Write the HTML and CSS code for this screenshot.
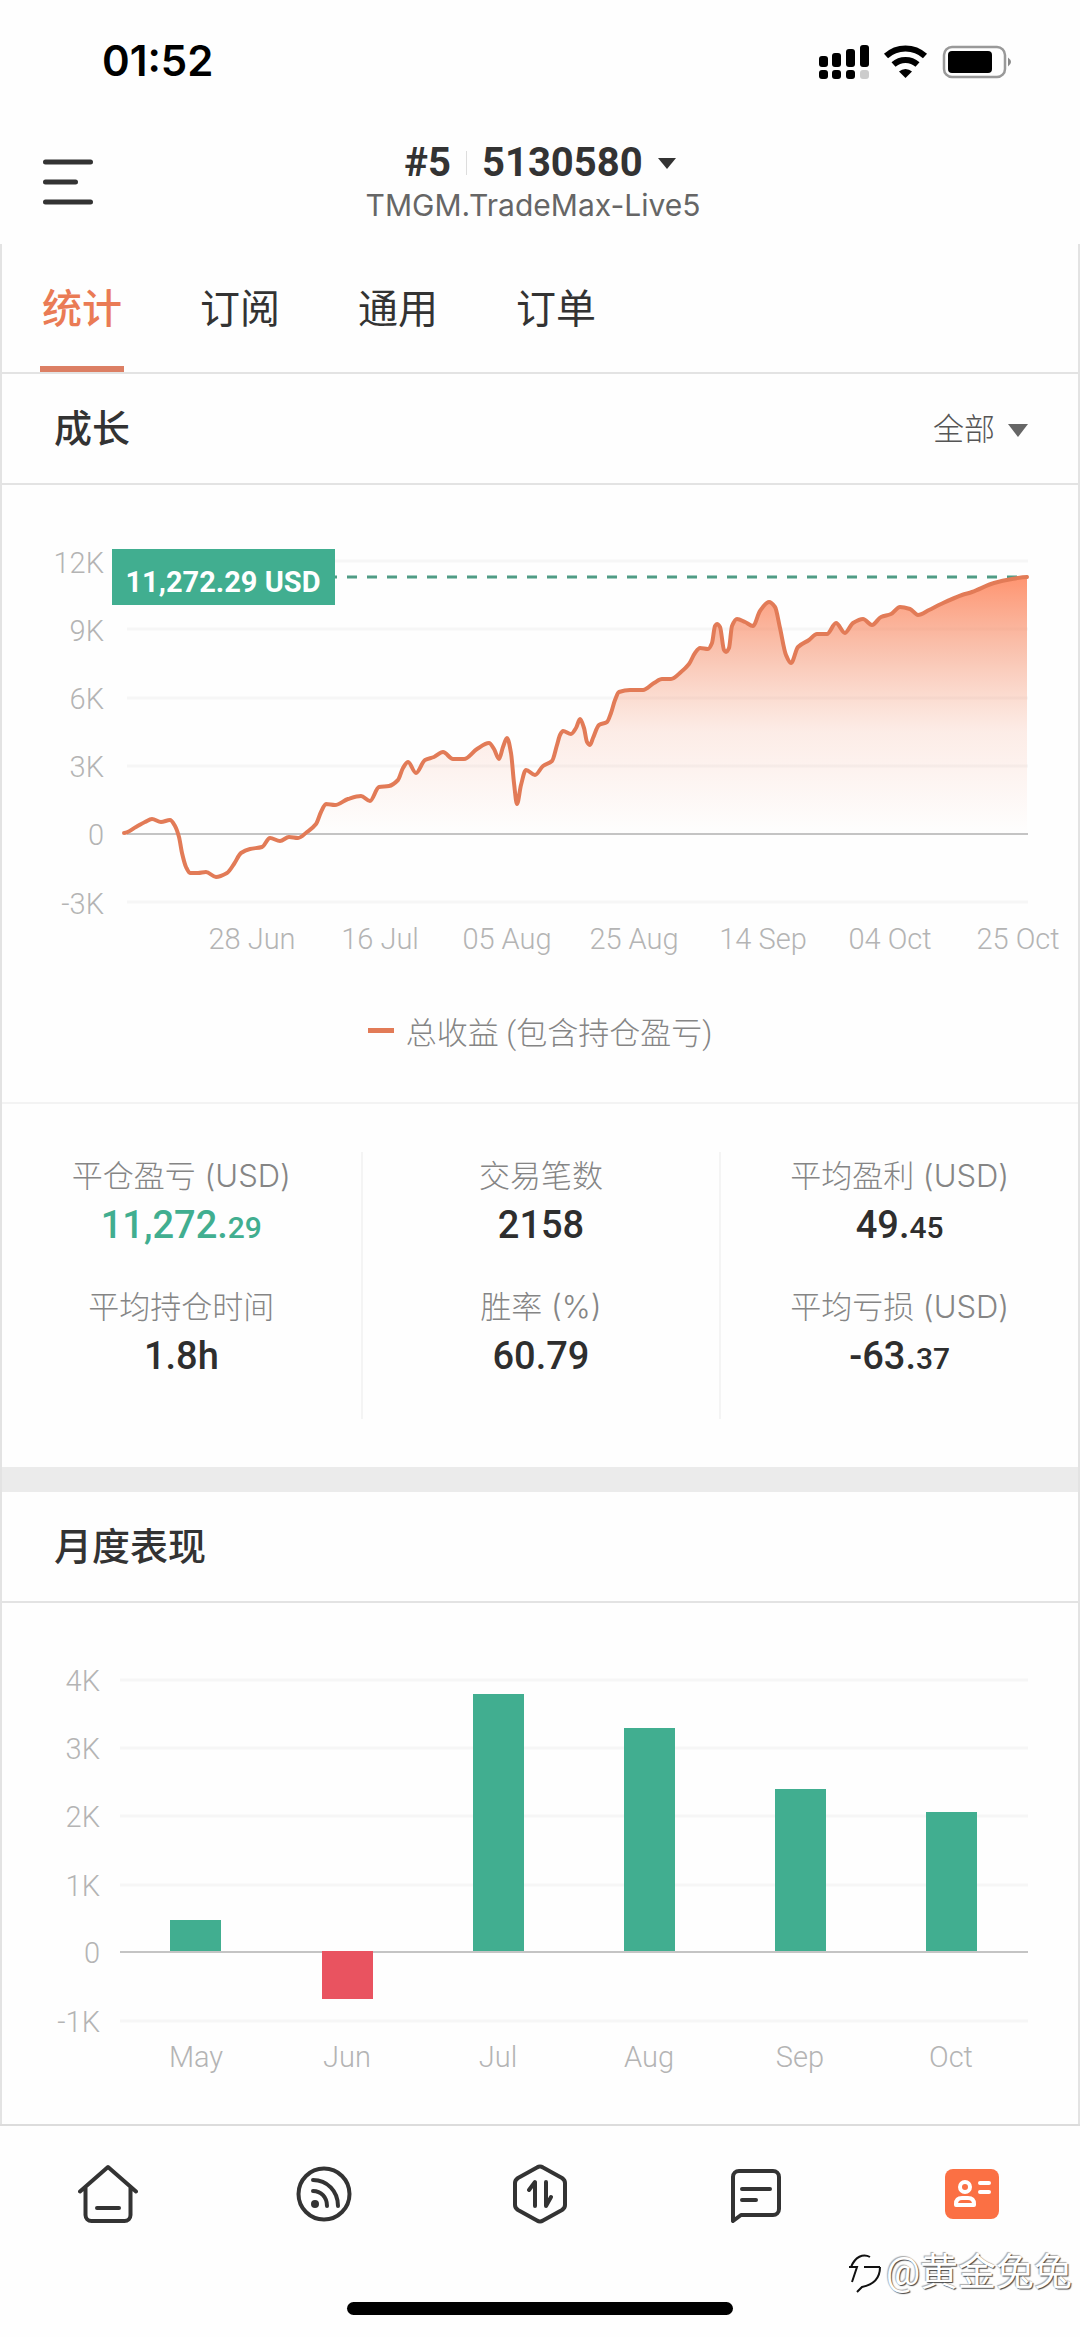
FILE: index.html
```html
<!DOCTYPE html>
<html lang="zh-CN">
<head>
<meta charset="utf-8">
<meta name="viewport" content="width=device-width, initial-scale=1">
<title>统计</title>
<link rel="stylesheet" href="styles.css">
</head>
<body>
<div class="status">
  <span class="clock">01:52</span>
  <svg class="status-icons" width="196" height="38" viewBox="0 0 196 38" aria-hidden="true">
    <rect x="2" y="14" width="9" height="11" rx="3"/><rect x="15" y="11" width="9" height="14" rx="3"/><rect x="29" y="7" width="9" height="18" rx="3"/><rect x="43" y="3" width="9" height="22" rx="3"/>
    <rect x="2" y="28" width="9" height="9" rx="3"/><rect x="15" y="28" width="9" height="9" rx="3"/><rect x="29" y="28" width="9" height="9" rx="3"/><rect x="43" y="28" width="9" height="9" rx="3" fill="#ccc"/>
    <path d="M69 14a29 29 0 0 1 39 0M76.500 22.500a18 18 0 0 1 24 0" fill="none" stroke="#000" stroke-width="6"/>
    <path d="M82 29.500a9.500 9.500 0 0 1 13 0L88.500 36z"/>
    <rect x="127" y="5" width="61" height="30" rx="8" fill="none" stroke="#999" stroke-width="2.500"/>
    <rect x="131" y="9" width="44" height="22" rx="4"/>
    <path d="M191 15.500q6 4.500 0 9z" fill="#888"/>
  </svg>
</div>

<header class="header">
  <button class="icon-button" aria-label="菜单">
    <svg width="50" height="46" viewBox="0 0 50 46"><path d="M2.500 3h45M2.500 23h30M2.500 43h45" stroke="#333" stroke-width="5" stroke-linecap="round"/></svg>
  </button>
  <div class="account">
    <button class="account-button"><span>#5</span><span class="bar"></span><span>5130580</span><svg width="18" height="12" viewBox="0 0 18 12"><path d="M0 1h18L9 12z" fill="#333"/></svg></button>
    <div class="server">TMGM.TradeMax-Live5</div>
  </div>
</header>

<main class="panel">
  <nav class="tabs">
    <a class="tab active" href="#stats">统计</a>
    <a class="tab" href="#subs">订阅</a>
    <a class="tab" href="#general">通用</a>
    <a class="tab" href="#orders">订单</a>
  </nav>

  <section id="stats">
    <div class="section-head">
      <h2>成长</h2>
      <label class="range"><select aria-label="时间范围"><option>全部</option></select><svg width="20" height="13" viewBox="0 0 20 13"><path d="M0 0h20L10 13z" fill="#666"/></svg></label>
    </div>
    <svg class="chart" viewBox="2 485 1076 487" role="img" aria-label="成长曲线">
      <defs>
        <linearGradient id="fade" gradientUnits="userSpaceOnUse" x1="0" y1="577" x2="0" y2="834">
          <stop offset="0" stop-color="#ff7a4d" stop-opacity=".8"/><stop offset=".3" stop-color="#f58a64" stop-opacity=".5"/>
          <stop offset=".6" stop-color="#f59a7a" stop-opacity=".18"/><stop offset="1" stop-color="#f59a7a" stop-opacity="0"/>
        </linearGradient>
      </defs>
      <g class="grid"><path d="M127 561H1028M127 629H1028M127 698H1028M127 766H1028M127 902H1028"/></g>
      <path id="area" fill="url(#fade)"/>
      <path class="zero" d="M127 834H1028"/>
      <path class="current" d="M327 577H1028"/>
      <path id="curve"/>
      <g class="axis axis-y">
        <text x="104" y="573">12K</text><text x="104" y="641">9K</text><text x="104" y="709">6K</text><text x="104" y="777">3K</text><text x="104" y="845">0</text><text x="104" y="914">-3K</text>
      </g>
      <g class="axis axis-x">
        <text x="252" y="949">28 Jun</text><text x="380" y="949">16 Jul</text><text x="507" y="949">05 Aug</text><text x="634" y="949">25 Aug</text><text x="763" y="949">14 Sep</text><text x="890" y="949">04 Oct</text><text x="1018" y="949">25 Oct</text>
      </g>
      <rect x="112" y="549" width="223" height="56" fill="#41ae90"/>
      <text class="flag" x="223" y="592">11,272.29 USD</text>
    </svg>
    <div class="legend"><span class="swatch"></span>总收益 (包含持仓盈亏)</div>
    <div class="stats">
      <dl class="stat-col">
        <div><dt>平仓盈亏 (USD)</dt><dd class="gain">11,272.<small>29</small></dd></div>
        <div><dt>平均持仓时间</dt><dd>1.8h</dd></div>
      </dl>
      <dl class="stat-col">
        <div><dt>交易笔数</dt><dd>2158</dd></div>
        <div><dt>胜率 (%)</dt><dd>60.79</dd></div>
      </dl>
      <dl class="stat-col">
        <div><dt>平均盈利 (USD)</dt><dd>49.<small>45</small></dd></div>
        <div><dt>平均亏损 (USD)</dt><dd>-63.<small>37</small></dd></div>
      </dl>
    </div>
  </section>

  <section class="monthly">
    <div class="section-head"><h2>月度表现</h2></div>
    <svg class="chart" viewBox="2 1605 1076 521" role="img" aria-label="月度表现">
      <g class="grid"><path d="M120 1682H1028M120 1750H1028M120 1818H1028M120 1887H1028M120 2023H1028"/></g>
      <path class="zero" d="M120 1954H1028"/>
      <g fill="#41ae90">
        <rect x="170" y="1922" width="51" height="31"/><rect x="473" y="1696" width="51" height="257"/><rect x="624" y="1730" width="51" height="223"/><rect x="775" y="1791" width="51" height="162"/><rect x="926" y="1814" width="51" height="139"/>
      </g>
      <rect x="322" y="1953" width="51" height="48" fill="#e95360"/>
      <g class="axis axis-y">
        <text x="100" y="1693">4K</text><text x="100" y="1761">3K</text><text x="100" y="1829">2K</text><text x="100" y="1898">1K</text><text x="100" y="1965">0</text><text x="100" y="2034">-1K</text>
      </g>
      <g class="axis axis-x">
        <text x="196" y="2069">May</text><text x="347" y="2069">Jun</text><text x="498" y="2069">Jul</text><text x="649" y="2069">Aug</text><text x="800" y="2069">Sep</text><text x="951" y="2069">Oct</text>
      </g>
    </svg>
  </section>
</main>

<footer class="footer">
  <nav class="bottom-nav">
    <a href="#home" aria-label="首页"><svg viewBox="0 0 60 60"><path d="M2 27.500 30 3l28 24.500M7.500 23v28a6 6 0 0 0 6 6h33a6 6 0 0 0 6-6V23M19 44h22"/></svg></a>
    <a href="#feed" aria-label="动态"><svg viewBox="0 0 60 60"><circle cx="30" cy="30" r="25.500"/><path d="M19 16c14 0 25 11 25 26M19 27c8 0 14 6 14 15"/><circle cx="21" cy="40" r="4" fill="#333" stroke="none"/></svg></a>
    <a href="#trade" aria-label="交易"><svg viewBox="0 0 60 60"><path d="M27 3.500q3-2 6 0L52 14q3 2 3 5v22q0 3-3 5L33 56.500q-3 2-6 0L8 46q-3-2-3-5V19q0-3 3-5zM19 26l6-8v24M36 18v24l5-9"/></svg></a>
    <a href="#messages" aria-label="消息"><svg viewBox="0 0 60 60"><path d="M7 57V13a6 6 0 0 1 6-6h34a6 6 0 0 1 6 6v32a6 6 0 0 1-6 6H15zM16 25h28M16 36h14"/></svg></a>
    <a href="#account" aria-label="账户"><svg viewBox="0 0 60 60"><rect x="3" y="5" width="54" height="50" rx="8" fill="#fb7044" stroke="none"/><g stroke="#fff"><circle cx="23" cy="23" r="5"/><path d="M14 41v-1q0-6 6-6h6q6 0 6 6v1zM38 19h9M38 28h9"/></g></svg></a>
  </nav>
  <div class="home-bar"></div>
  <div class="watermark">
    <svg width="36" height="44" viewBox="0 0 36 44" fill="none" stroke="#111" stroke-width="2"><path d="M4 17c4-10 12-14 19-10M2 17h8L5 32M17 17h16M33 17c0 12-8 18-18 20l-5 5"/></svg>
    <span>@黄金兔兔</span>
  </div>
</footer>
<script src="chart.js"></script>
</body>
</html>
```

FILE: styles.css
```css
* { box-sizing: border-box; }
body {
  margin: 0;
  background: #fefefe;
  color: #333;
  font-family: Roboto, "Noto Sans CJK SC", sans-serif;
}
button { border: 0; background: none; padding: 0; color: inherit; font: inherit; }
h2, dl, dd { margin: 0; }

.status {
  display: flex;
  align-items: center;
  justify-content: space-between;
  height: 122px;
  padding: 0 67px 0 102px;
}
.clock { font: 600 42px/48px Inter, sans-serif; color: #000; }

.header {
  display: grid;
  grid-template-columns: 50px 1fr 50px;
  align-items: center;
  height: 122px;
  padding: 0 43px 2px;
}
.icon-button svg { display: block; }
.account { display: flex; flex-direction: column; align-items: center; }
.account-button {
  display: flex;
  align-items: center;
  gap: 15px;
  font-size: 40px;
  font-weight: 700;
  line-height: 46px;
}
.bar { width: 1px; height: 24px; background: #ddd; }
.server { padding-right: 14px; font: 400 30px/38px Inter, sans-serif; color: #666; }

.panel { border: solid #e3e3e3; border-width: 0 2px; }
.tabs { display: flex; gap: 74px; height: 130px; padding-left: 38px; border-bottom: 2px solid #e3e3e3; }
.tab {
  padding: 0 2px;
  border-bottom: 6px solid transparent;
  color: #333;
  font-size: 40px;
  line-height: 132px;
  text-decoration: none;
}
.tab.active { color: #ea7b55; border-color: #dc7f64; font-weight: 500; }

.section-head {
  display: flex;
  align-items: center;
  justify-content: space-between;
  height: 111px;
  padding: 0 50px 0 52px;
  border-bottom: 2px solid #e3e3e3;
}
h2 { font-size: 38px; line-height: 56px; font-weight: 500; }
.range { display: flex; align-items: center; gap: 13px; padding-top: 3px; }
.range select {
  appearance: none;
  border: 0;
  padding: 0;
  background: none;
  color: #555;
  font: 300 31px/44px Roboto, "Noto Sans CJK SC", sans-serif;
}

.chart { display: block; width: 100%; height: auto; }
.grid { stroke: #f6f6f6; stroke-width: 3; }
.zero { stroke: #c4c4c4; stroke-width: 2; }
.current { stroke: #4f9c85; stroke-width: 3; stroke-dasharray: 10 10; }
#curve { fill: none; stroke: #e27b57; stroke-width: 4; stroke-linecap: round; stroke-linejoin: round; }
.axis { fill: #b4b4b4; font-size: 29px; font-weight: 300; }
.axis-y { text-anchor: end; }
.axis-x { text-anchor: middle; }
.flag { fill: #fff; font-size: 29px; font-weight: 700; text-anchor: middle; }

.legend {
  display: flex;
  align-items: center;
  justify-content: center;
  gap: 12px;
  height: 132px;
  padding-bottom: 14px;
  border-bottom: 2px solid #f3f3f3;
  color: #858585;
  font-size: 31px;
  font-weight: 300;
}
.swatch { width: 26px; height: 5px; background: #e27b57; }

.stats { display: grid; grid-template-columns: repeat(3, 1fr); padding: 48px 0; }
.stat-col { display: grid; gap: 35px; padding-bottom: 40px; text-align: center; }
.stat-col + .stat-col { border-left: 2px solid #f4f4f4; }
dt {
  height: 48px;
  color: #858585;
  font-family: Inter, "Noto Sans CJK SC", sans-serif;
  font-size: 31px;
  font-weight: 300;
  line-height: 48px;
}
dd { height: 48px; color: #2e2e2e; font-size: 38px; font-weight: 500; line-height: 50px; }
small { font-size: 30px; line-height: 30px; }
.gain { color: #41ae90; }

.monthly { border-top: 25px solid #ebebeb; }

.footer { position: relative; border-top: 2px solid #dcdcdc; }
.bottom-nav { display: grid; grid-template-columns: repeat(5, 1fr); padding-top: 38px; }
.bottom-nav a { display: flex; justify-content: center; }
.bottom-nav svg {
  width: 60px;
  height: 60px;
  fill: none;
  stroke: #333;
  stroke-width: 4;
  stroke-linecap: round;
  stroke-linejoin: round;
}
.home-bar { width: 386px; height: 13px; margin: 78px auto 0; border-radius: 7px; background: #000; }
.footer { padding-bottom: 20px; }
.watermark {
  position: absolute;
  right: 8px;
  bottom: 36px;
  display: flex;
  align-items: center;
  gap: 3px;
  color: #fff;
  font-size: 38px;
  line-height: 54px;
  text-shadow: 1px 1px 1px #444, -1px -1px 1px #aaa;
}
```

FILE: chart.js
```js
// Equity samples as [x, y] in the growth chart's coordinate system.
const points = [
  [124,833],[136,827],[145,822],[152,819],[161,822],[170,820],[175,826],[179,837],[182,853],[186,867],
  [190,873],[198,873],[206,872],[216,877],[227,873],[234,864],[241,853],[250,849],[262,847],[270,838],
  [280,841],[289,837],[298,838],[307,832],[316,824],[321,812],[326,804],[335,805],[348,799],[361,796],
  [370,801],[379,787],[389,786],[398,780],[403,768],[408,762],[416,773],[425,760],[434,757],[443,752],
  [453,759],[464,759],[477,749],[489,743],[494,749],[499,759],[503,747],[507,738],[511,753],[514,783],
  [517,804],[521,785],[526,770],[535,775],[543,766],[552,761],[557,745],[560,735],[563,731],[571,734],
  [576,728],[580,719],[584,728],[587,742],[590,745],[593,738],[599,725],[607,722],[611,713],[615,700],
  [619,692],[630,690],[643,690],[654,683],[662,679],[671,679],[681,672],[689,664],[695,653],[700,648],
  [708,649],[712,643],[715,626],[717,624],[720,627],[724,650],[726,652],[729,648],[732,626],[737,619],
  [745,622],[753,626],[760,611],[769,602],[775,607],[780,628],[786,655],[791,663],[798,647],[809,640],
  [817,634],[827,634],[836,623],[845,633],[853,623],[863,619],[872,625],[881,617],[891,614],[900,607],
  [910,609],[918,615],[929,610],[941,604],[962,595],[972,592],[994,583],[1012,579],[1027,577]
];

// Monotone cubic interpolation: slopes flatten at local extremes.
const slope = points.map((p, i) => {
  if (i === 0 || i === points.length - 1) return 0;
  const [a, c] = [points[i - 1], points[i + 1]];
  const left = (p[1] - a[1]) / (p[0] - a[0]);
  const right = (c[1] - p[1]) / (c[0] - p[0]);
  return left * right <= 0 ? 0 : 2 * left * right / (left + right);
});
let d = `M${points[0]}`;
for (let i = 1; i < points.length; i++) {
  const [x0, y0] = points[i - 1];
  const [x1, y1] = points[i];
  const h = (x1 - x0) / 3;
  d += `C${x0 + h},${y0 + slope[i - 1] * h} ${x1 - h},${y1 - slope[i] * h} ${x1},${y1}`;
}
document.getElementById("curve").setAttribute("d", d);

// The fill covers only the part above the zero line, from its last crossing.
const start = points.findIndex(p => p[0] === 307);
const tail = d.split("C").slice(start + 1).map(s => "C" + s).join("");
document.getElementById("area").setAttribute("d", `M303,834L307,832${tail}V834Z`);
```
